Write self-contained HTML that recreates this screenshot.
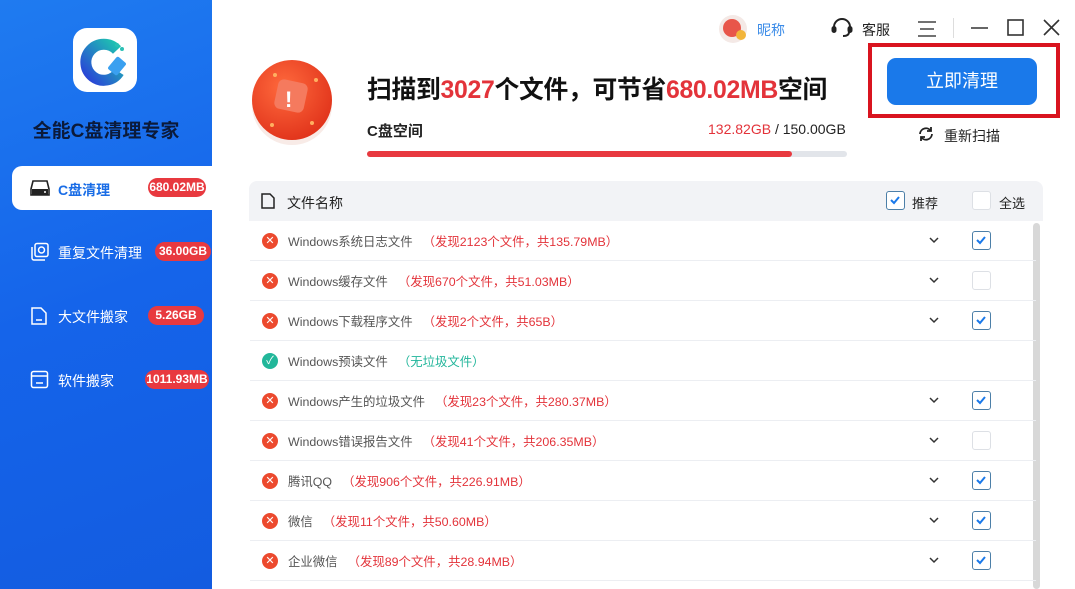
<!DOCTYPE html>
<html><head><meta charset="utf-8"><style>
*{margin:0;padding:0;box-sizing:border-box}
body{width:1075px;height:589px;overflow:hidden;background:#fff;font-family:"Liberation Sans","Noto Sans CJK SC",sans-serif;position:relative;color:#222}
.a{position:absolute}
.side{left:0;top:0;width:212px;height:589px;background:linear-gradient(160deg,#1f7bf0 0%,#1564ea 50%,#135ce0 100%)}
.logo{left:73px;top:28px;width:64px;height:64px;background:#fff;border-radius:14px}
.title{left:0;width:212px;top:116px;text-align:center;font-size:19px;font-weight:bold;color:#0b1a3a}
.act{left:12px;top:166px;width:200px;height:44px;background:#fff;border-radius:10px 0 0 10px}
.nav{left:58px;font-size:14px;color:#fff}
.badge{height:19px;line-height:19px;border-radius:10px;background:#e8393f;color:#fff;font-size:12px;font-weight:bold;text-align:center}
.row{left:250px;width:786px;height:40px;border-bottom:1px solid #eceef2}
.row .n{position:absolute;left:38px;top:11px;font-size:12.4px;color:#555;white-space:nowrap}
.row .n span{margin-left:10px;color:#e3333a}
.row .n span.g{color:#20b59a}
.ic{position:absolute;left:12px;top:12px;width:16px;height:16px;border-radius:50%;background:#ec4a2e;color:#fff;font-size:11px;line-height:16px;text-align:center}
.cb{position:absolute;left:722px;top:10px;width:19px;height:19px;border:1.5px solid #4c7fa8;border-radius:3px}
.cb.e{border:1px solid #dde0e5}
.cv{position:absolute;left:678px;top:14px}
</style></head><body>
<div class="a side"></div>
<div class="a logo"><svg width="64" height="64" viewBox="0 0 64 64"><defs><linearGradient id="g" x1="0" y1="1" x2="1" y2="0"><stop offset="0" stop-color="#2a3fd8"/><stop offset="1" stop-color="#1ec6b0"/></linearGradient></defs><path d="M44 22A18 18 0 1 0 46 44" fill="none" stroke="url(#g)" stroke-width="11"/><rect x="38" y="30" width="12" height="16" rx="2" fill="#3aa0f0" transform="rotate(40 44 38)"/><circle cx="44" cy="17" r="2" fill="#2bc0b5"/><circle cx="49" cy="21" r="2" fill="#2bc0b5"/></svg></div>
<div class="a title">全能C盘清理专家</div>
<div class="a act"></div>
<svg class="a" style="left:30px;top:179px" width="20" height="18" viewBox="0 0 20 18"><path d="M3 2h14l2 8v6H1v-6z" fill="none" stroke="#222" stroke-width="1.6"/><rect x="2" y="10" width="16" height="6" fill="#222"/><circle cx="15" cy="13" r="1" fill="#fff"/></svg>
<div class="a" style="left:58px;top:180px;font-size:14px;font-weight:bold;color:#1a6de6">C盘清理</div>
<div class="a badge" style="left:148px;top:178px;width:58px">680.02MB</div>
<svg class="a" style="left:30px;top:242px" width="20" height="20" viewBox="0 0 20 20" fill="none" stroke="#fff" stroke-width="1.5"><rect x="5" y="1.5" width="13" height="13" rx="2"/><path d="M2 5v11a2 2 0 0 0 2 2h11"/><circle cx="11.5" cy="8" r="3"/></svg>
<div class="a nav" style="top:243px">重复文件清理</div>
<div class="a badge" style="left:155px;top:242px;width:56px">36.00GB</div>
<svg class="a" style="left:30px;top:306px" width="18" height="20" viewBox="0 0 18 20" fill="none" stroke="#fff" stroke-width="1.5"><path d="M2 2h9l5 5v11H2z"/><path d="M6 14h6"/></svg>
<div class="a nav" style="top:307px">大文件搬家</div>
<div class="a badge" style="left:148px;top:306px;width:56px">5.26GB</div>
<svg class="a" style="left:30px;top:370px" width="19" height="19" viewBox="0 0 19 19" fill="none" stroke="#fff" stroke-width="1.5"><rect x="1.5" y="1.5" width="16" height="16" rx="2"/><path d="M1.5 6h16M6 13h7"/></svg>
<div class="a nav" style="top:371px">软件搬家</div>
<div class="a badge" style="left:145px;top:370px;width:64px">1011.93MB</div>

<div class="a" style="left:719px;top:15px;width:28px;height:28px;border-radius:50%;background:#f4e9e6"></div>
<div class="a" style="left:723px;top:19px;width:18px;height:18px;border-radius:50%;background:#e8564a"></div>
<div class="a" style="left:736px;top:30px;width:10px;height:10px;border-radius:50%;background:#f2b53a"></div>
<div class="a" style="left:757px;top:20px;font-size:14px;color:#3a8be8">昵称</div>
<svg class="a" style="left:831px;top:18px" width="22" height="20" viewBox="0 0 22 20" fill="none" stroke="#222" stroke-width="2"><path d="M3 11V9a8 8 0 0 1 16 0v2"/><rect x="1.5" y="9" width="3" height="5" rx="1.5" fill="#222"/><rect x="17.5" y="9" width="3" height="5" rx="1.5" fill="#222"/><path d="M18 14q0 4-6 4"/></svg>
<div class="a" style="left:862px;top:20px;font-size:14px;color:#222">客服</div>
<svg class="a" style="left:917px;top:20px" width="20" height="18" stroke="#444" stroke-width="1.5"><path d="M1 2h18M3 9h14M1 16h18"/></svg>
<div class="a" style="left:953px;top:18px;width:1px;height:20px;background:#ddd"></div>
<svg class="a" style="left:970px;top:18px" width="90" height="20" fill="none" stroke="#333" stroke-width="1.6"><path d="M1 10h17"/><rect x="38" y="2" width="15" height="15"/><path d="M74 2l15 15M89 2L74 17"/></svg>

<svg class="a" style="left:250px;top:58px" width="90" height="90" viewBox="0 0 90 90"><defs><radialGradient id="r" cx="0.4" cy="0.35" r="0.7"><stop offset="0" stop-color="#ff6a3d"/><stop offset="1" stop-color="#e0321a"/></radialGradient></defs><ellipse cx="42" cy="47" rx="40" ry="40" fill="#f1d8d0" opacity=".5"/><circle cx="42" cy="42" r="40" fill="url(#r)"/><rect x="26" y="23" width="30" height="30" rx="6" fill="#f57a5e" transform="rotate(12 41 38)"/><text x="35" y="49" font-size="22" font-weight="bold" fill="#fff" font-family="Liberation Sans">!</text><circle cx="25" cy="17" r="2" fill="#ffb060"/><circle cx="66" cy="22" r="2" fill="#ffb060"/><circle cx="22" cy="67" r="2" fill="#ffb060"/><circle cx="62" cy="65" r="2" fill="#ffb060"/></svg>
<div class="a" style="left:367px;top:70px;font-size:24.8px;font-weight:bold;color:#111;white-space:nowrap;letter-spacing:-0.3px">扫描到<span style="color:#e3333a">3027</span>个文件，可节省<span style="color:#e3333a">680.02MB</span>空间</div>
<div class="a" style="left:367px;top:120px;font-size:15px;font-weight:bold;color:#222">C盘空间</div>
<div class="a" style="left:708px;top:121px;font-size:14px;color:#222"><span style="color:#e3333a">132.82GB</span> / 150.00GB</div>
<div class="a" style="left:367px;top:151px;width:480px;height:6px;border-radius:3px;background:#e2e5ea"></div>
<div class="a" style="left:367px;top:151px;width:425px;height:6px;border-radius:3px;background:#e8393f"></div>
<div class="a" style="left:868px;top:43px;width:192px;height:75px;border:4px solid #d9141f"></div>
<div class="a" style="left:887px;top:58px;width:150px;height:47px;border-radius:9px;background:#1a79ea;color:#fff;font-size:18px;text-align:center;line-height:47px">立即清理</div>
<svg class="a" style="left:918px;top:126px" width="16" height="16" fill="none" stroke="#222" stroke-width="1.8"><path d="M2 8a6 6 0 0 1 11-3M14 8a6 6 0 0 1-11 3"/><path d="M13 1v4h-4M3 15v-4h4"/></svg>
<div class="a" style="left:944px;top:126px;font-size:14px;color:#222">重新扫描</div>

<div class="a" style="left:249px;top:181px;width:794px;height:40px;background:#f2f3f6;border-radius:8px 8px 0 0"></div>
<svg class="a" style="left:261px;top:193px" width="14" height="16" fill="none" stroke="#222" stroke-width="1.5"><path d="M1 1h8l4 4v10H1z"/></svg>
<div class="a" style="left:287px;top:193px;font-size:14px;color:#222">文件名称</div>
<div class="a" style="left:886px;top:191px;border:1.5px solid #4c7fa8;width:19px;height:19px;border-radius:3px;background:#fff"><svg width="16" height="16" style="position:absolute;left:0;top:0"><path d="M4 8l3 3 5-6" fill="none" stroke="#1a79ea" stroke-width="2"/></svg></div>
<div class="a" style="left:912px;top:193px;font-size:13px;color:#222">推荐</div>
<div class="a" style="left:972px;top:191px;width:19px;height:19px;border:1px solid #dde0e5;border-radius:3px;background:#fff"></div>
<div class="a" style="left:999px;top:193px;font-size:13px;color:#222">全选</div>
<div class="a" style="left:1033px;top:223px;width:7px;height:366px;border-radius:4px;background:#d8d8d8"></div>

<div class="a row" style="top:221px"><div class="ic">✕</div><div class="n">Windows系统日志文件<span>（发现2123个文件，共135.79MB）</span></div><svg class="cv" width="12" height="10"><path d="M2 3l4 4 4-4" fill="none" stroke="#333" stroke-width="1.5"/></svg><div class="cb"><svg width="16" height="16"><path d="M4 8l3 3 5-6" fill="none" stroke="#1a79ea" stroke-width="2"/></svg></div></div>
<div class="a row" style="top:261px"><div class="ic">✕</div><div class="n">Windows缓存文件<span>（发现670个文件，共51.03MB）</span></div><svg class="cv" width="12" height="10"><path d="M2 3l4 4 4-4" fill="none" stroke="#333" stroke-width="1.5"/></svg><div class="cb e"></div></div>
<div class="a row" style="top:301px"><div class="ic">✕</div><div class="n">Windows下载程序文件<span>（发现2个文件，共65B）</span></div><svg class="cv" width="12" height="10"><path d="M2 3l4 4 4-4" fill="none" stroke="#333" stroke-width="1.5"/></svg><div class="cb"><svg width="16" height="16"><path d="M4 8l3 3 5-6" fill="none" stroke="#1a79ea" stroke-width="2"/></svg></div></div>
<div class="a row" style="top:341px"><div class="ic" style="background:#22b79a">✓</div><div class="n">Windows预读文件<span class="g">（无垃圾文件）</span></div></div>
<div class="a row" style="top:381px"><div class="ic">✕</div><div class="n">Windows产生的垃圾文件<span>（发现23个文件，共280.37MB）</span></div><svg class="cv" width="12" height="10"><path d="M2 3l4 4 4-4" fill="none" stroke="#333" stroke-width="1.5"/></svg><div class="cb"><svg width="16" height="16"><path d="M4 8l3 3 5-6" fill="none" stroke="#1a79ea" stroke-width="2"/></svg></div></div>
<div class="a row" style="top:421px"><div class="ic">✕</div><div class="n">Windows错误报告文件<span>（发现41个文件，共206.35MB）</span></div><svg class="cv" width="12" height="10"><path d="M2 3l4 4 4-4" fill="none" stroke="#333" stroke-width="1.5"/></svg><div class="cb e"></div></div>
<div class="a row" style="top:461px"><div class="ic">✕</div><div class="n">腾讯QQ<span>（发现906个文件，共226.91MB）</span></div><svg class="cv" width="12" height="10"><path d="M2 3l4 4 4-4" fill="none" stroke="#333" stroke-width="1.5"/></svg><div class="cb"><svg width="16" height="16"><path d="M4 8l3 3 5-6" fill="none" stroke="#1a79ea" stroke-width="2"/></svg></div></div>
<div class="a row" style="top:501px"><div class="ic">✕</div><div class="n">微信<span>（发现11个文件，共50.60MB）</span></div><svg class="cv" width="12" height="10"><path d="M2 3l4 4 4-4" fill="none" stroke="#333" stroke-width="1.5"/></svg><div class="cb"><svg width="16" height="16"><path d="M4 8l3 3 5-6" fill="none" stroke="#1a79ea" stroke-width="2"/></svg></div></div>
<div class="a row" style="top:541px"><div class="ic">✕</div><div class="n">企业微信<span>（发现89个文件，共28.94MB）</span></div><svg class="cv" width="12" height="10"><path d="M2 3l4 4 4-4" fill="none" stroke="#333" stroke-width="1.5"/></svg><div class="cb"><svg width="16" height="16"><path d="M4 8l3 3 5-6" fill="none" stroke="#1a79ea" stroke-width="2"/></svg></div></div>
</body></html>
